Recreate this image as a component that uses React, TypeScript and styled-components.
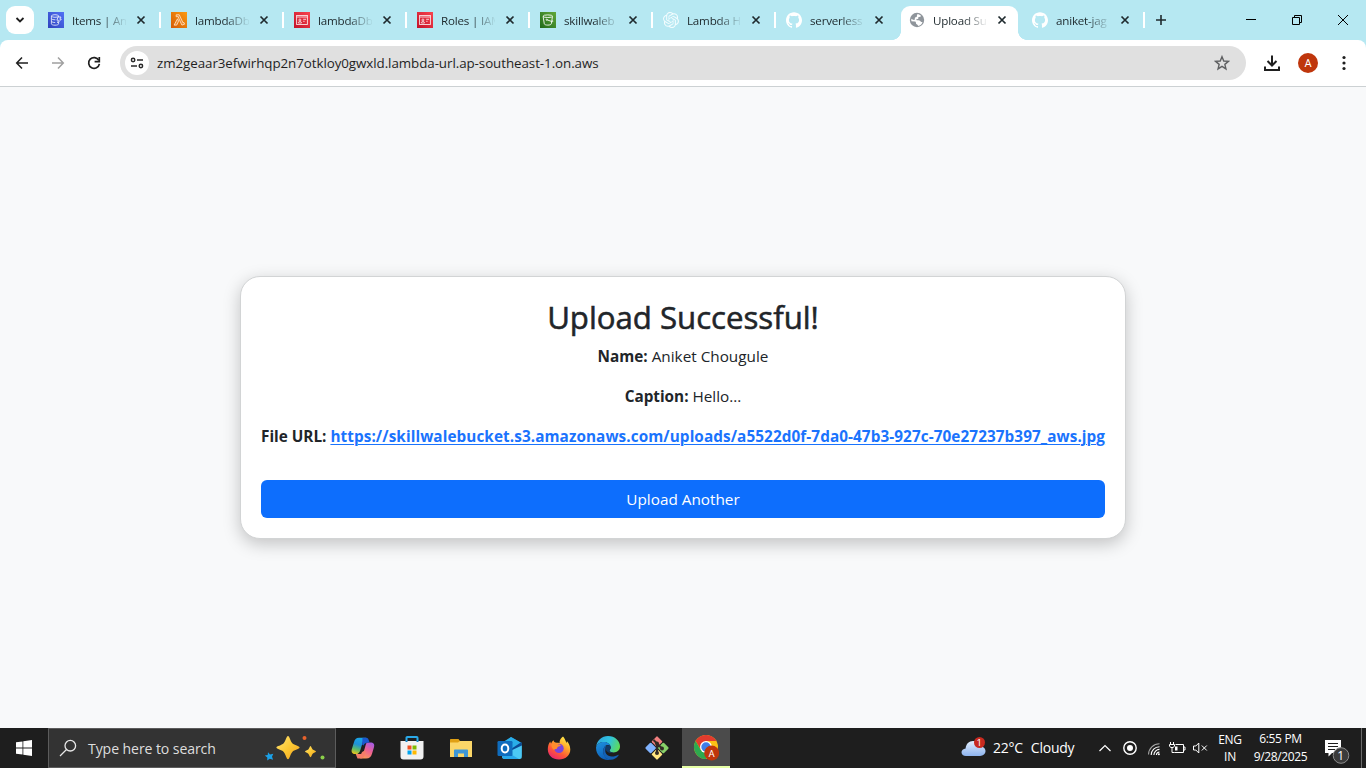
import React from "react";
import styled, { createGlobalStyle, css } from "styled-components";
import { SiOpenai, SiGithub } from "react-icons/si";

const GlobalStyle = createGlobalStyle`
  * { box-sizing: border-box; }
  body {
    margin: 0;
    overflow: hidden;
    font-family: "Open Sans", "Noto Sans", sans-serif;
    color: #212529;
  }
  svg { display: block; flex: none; }
`;

const Screen = styled.div`
  width: 1366px;
  height: 768px;
  display: flex;
  flex-direction: column;
  background: #f8f9fa;
`;

/* ---------- Tab strip ---------- */

const TabStrip = styled.header`
  height: 40px;
  flex: none;
  display: flex;
  align-items: center;
  background: #b6e8f2;
`;

const TabSearch = styled.button`
  width: 28px;
  height: 28px;
  margin: 0 6px;
  padding: 0;
  border: 0;
  border-radius: 9px;
  background: #fff;
  display: flex;
  align-items: center;
  justify-content: center;
`;

const Tab = styled.div<{ $active?: boolean }>`
  position: relative;
  width: 117px;
  height: 34px;
  margin-top: 6px;
  padding: 0 0 6px 8px;
  display: flex;
  align-items: center;
  flex: none;
  ${(p) =>
    p.$active &&
    css`
      background: #fff;
      border-radius: 9px 9px 0 0;
      &::before,
      &::after {
        content: "";
        position: absolute;
        bottom: 0;
        width: 9px;
        height: 9px;
      }
      &::before {
        left: -9px;
        background: radial-gradient(circle at 0 0, transparent 8.6px, #fff 9.2px);
      }
      &::after {
        right: -9px;
        background: radial-gradient(circle at 100% 0, transparent 8.6px, #fff 9.2px);
      }
    `}
`;

const TabTitle = styled.span`
  width: 54px;
  margin-left: 8px;
  padding-top: 2px;
  white-space: nowrap;
  font-size: 11.6px;
  line-height: 18px;
  letter-spacing: -0.2px;
  color: #1d282c;
  mask-image: linear-gradient(to right, #000 56%, rgba(0, 0, 0, 0.08) 98%);
`;

const TabClose = styled.span`
  margin-left: 10px;
  width: 10px;
  height: 10px;
`;

const Separator = styled.i<{ $hidden?: boolean }>`
  width: 2px;
  height: 16px;
  margin: 0 2px;
  flex: none;
  background: ${(p) => (p.$hidden ? "transparent" : "#fff")};
`;

const NewTab = styled.div`
  width: 28px;
  display: flex;
  justify-content: center;
`;

const WindowControls = styled.div`
  margin-left: auto;
  display: flex;
`;

const WindowButton = styled.div`
  width: 46px;
  height: 40px;
  display: flex;
  align-items: center;
  justify-content: center;
`;

/* ---------- Toolbar ---------- */

const ToolbarBack = styled.div`
  flex: none;
  background: #b6e8f2;
`;

const Toolbar = styled.nav`
  height: 47px;
  padding-bottom: 1px;
  display: flex;
  align-items: center;
  background: #fff;
  border-radius: 8px 8px 0 0;
  border-bottom: 1px solid #ccd1d3;
`;

const NavButtons = styled.div`
  width: 120px;
  padding-left: 4px;
  display: flex;
`;

const NavButton = styled.div`
  width: 36px;
  display: flex;
  justify-content: center;
`;

const Omnibox = styled.div`
  width: 1126px;
  height: 34px;
  padding: 0 16px 0 5px;
  display: flex;
  align-items: center;
  justify-content: space-between;
  border-radius: 17px;
  background: #e0e0e0;
`;

const Address = styled.div`
  display: flex;
  align-items: center;
  gap: 8px;
`;

const SiteInfo = styled.div`
  width: 24px;
  height: 24px;
  border-radius: 50%;
  background: #fff;
  display: flex;
  align-items: center;
  justify-content: center;
`;

const Url = styled.span`
  font-size: 13.35px;
  line-height: 20px;
  letter-spacing: -0.06px;
  color: #1f1f1f;
`;

const ToolbarActions = styled.div`
  display: flex;
  align-items: center;
  padding-left: 8px;
`;

const Avatar = styled.span`
  width: 20px;
  height: 20px;
  border-radius: 50%;
  background: #bf360c;
  color: #fff;
  font: 400 11px/21px Roboto, sans-serif;
  text-align: center;
`;

/* ---------- Page ---------- */

const Page = styled.main`
  flex: 1;
  display: flex;
  align-items: center;
  justify-content: center;
`;

const Card = styled.section`
  width: 886px;
  padding: 20px;
  border: 1px solid #d2d4d5;
  border-radius: 20px;
  background: #fff;
  box-shadow: 0 5px 17px rgba(0, 0, 0, 0.22);
  text-align: center;
`;

const Title = styled.h2`
  margin: 0 0 7px;
  padding-top: 1px;
  font-size: 31.2px;
  line-height: 38.4px;
  font-weight: 500;
  letter-spacing: -0.02px;
  -webkit-text-stroke: 0.55px #212529;
`;

const Line = styled.p`
  margin: 0 0 16px;
  font-size: 15.3px;
  line-height: 24px;
  white-space: nowrap;
`;

const Label = styled.strong`
  font-weight: 700;
`;

const FileLink = styled.a`
  font-weight: 700;
  letter-spacing: 0.08px;
  color: #1a73fd;
  text-decoration: underline;
  text-decoration-thickness: 1px;
  text-underline-offset: 2px;
`;

const PrimaryButton = styled.button`
  display: block;
  width: 100%;
  height: 38px;
  margin-top: 32px;
  padding: 0;
  border: 0;
  border-radius: 6px;
  background: #0d6efd;
  color: #fff;
  font: 400 15.3px/38px "Open Sans", "Noto Sans", sans-serif;
`;

/* ---------- Taskbar ---------- */

const Taskbar = styled.footer`
  height: 40px;
  flex: none;
  display: flex;
  background: #1e1e1e;
  color: #fff;
`;

const Start = styled.div`
  width: 48px;
  display: flex;
  align-items: center;
  justify-content: center;
`;

const Search = styled.div`
  width: 288px;
  height: 40px;
  padding: 0 9px 0 10px;
  display: flex;
  align-items: center;
  border: 1px solid #5c5c5c;
  background: #333;
`;

const SearchText = styled.span`
  flex: 1;
  margin-left: 11px;
  padding-top: 2px;
  font-size: 14.1px;
  line-height: 20px;
  letter-spacing: -0.1px;
  color: #dedede;
`;

const Apps = styled.div`
  display: flex;
  gap: 1px;
  margin-left: 3px;
`;

const AppButton = styled.div<{ $active?: boolean }>`
  width: 48px;
  height: 40px;
  display: flex;
  align-items: center;
  justify-content: center;
  background: ${(p) => (p.$active ? "#4b4b4b" : "transparent")};
  border-bottom: 2px solid ${(p) => (p.$active ? "#e6ffa6" : "transparent")};
  border-top: 2px solid transparent;
`;

const Tray = styled.div`
  margin-left: auto;
  display: flex;
  align-items: center;
`;

const TrayCell = styled.div<{ $w: number; $top?: number }>`
  width: ${(p) => p.$w}px;
  padding-top: ${(p) => p.$top ?? 0}px;
  display: flex;
  justify-content: center;
`;

const Weather = styled.span`
  width: 98px;
  margin-left: 7px;
  font-size: 14px;
  line-height: 20px;
  white-space: pre;
  word-spacing: 0.5px;
  letter-spacing: -0.22px;
`;

const TrayText = styled.div<{ $w: number; $lh: number; $ls?: number }>`
  width: ${(p) => p.$w}px;
  font-size: 12px;
  line-height: ${(p) => p.$lh}px;
  letter-spacing: ${(p) => p.$ls ?? 0}px;
  text-align: center;
  white-space: nowrap;
`;

const ShowDesktop = styled.i`
  width: 5px;
  height: 40px;
  border-left: 1px solid #6a6a6a;
`;

/* ---------- Icons ---------- */

const CloseIcon = () => (
  <svg width="10" height="10" viewBox="0 0 10 10">
    <path d="M1.5 1.5l7 7M8.5 1.5l-7 7" stroke="#1f2a2e" strokeWidth="1.7" />
  </svg>
);

const DynamoIcon = () => (
  <svg width="16" height="16" viewBox="0 0 16 16">
    <defs>
      <linearGradient id="dyn" x1="0" y1="1" x2="1" y2="0">
        <stop offset="0" stopColor="#2e43bd" />
        <stop offset="1" stopColor="#5271f6" />
      </linearGradient>
    </defs>
    <rect width="16" height="16" fill="url(#dyn)" />
    <g fill="none" stroke="#fff" strokeWidth=".9" opacity=".85">
      <ellipse cx="7" cy="4" rx="3.6" ry="1.3" />
      <path d="M3.4 4v7.8c0 .8 1.6 1.4 3.6 1.4s3.600-.6 3.600-1.400V10M3.400 6.600c.4.800 2 1.200 4 1.200M3.400 9.300c.4.800 2 1.200 3.800 1.200M10.600 4v1" />
      <path d="M10 5h3l-1.200 2.200h1.500L9.600 11l.8-2.800H8.900z" />
    </g>
  </svg>
);

const LambdaIcon = () => (
  <svg width="16" height="16" viewBox="0 0 16 16">
    <defs>
      <linearGradient id="lam" x1="0" y1="1" x2="1" y2="0">
        <stop offset="0" stopColor="#d45b07" />
        <stop offset="1" stopColor="#fc9a10" />
      </linearGradient>
    </defs>
    <rect width="16" height="16" fill="url(#lam)" />
    <path
      d="M5.200 2.800h3.100l3.700 8 1-.3.600 1.700-2.700.9L7.700 6.200 7.300 4.700H5.200zM6.500 6.800l1.100 2.400-1.900 3.900H3.100z"
      fill="#f08a2a"
      stroke="#ffe9d2"
      strokeWidth=".8"
      strokeLinejoin="round"
    />
  </svg>
);

const IamIcon = () => (
  <svg width="16" height="16" viewBox="0 0 16 16">
    <defs>
      <linearGradient id="iam" x1="0" y1="1" x2="1" y2="0">
        <stop offset="0" stopColor="#c3132b" />
        <stop offset="1" stopColor="#f9444e" />
      </linearGradient>
    </defs>
    <rect width="16" height="16" fill="url(#iam)" />
    <g fill="none" stroke="#fff" strokeWidth=".9" opacity=".85">
      <rect x="2.600" y="3.500" width="10.800" height="9" />
      <path d="M2.600 5h10.800M9.200 7.300h2.800M9.200 9.300h1.400M4.300 11c0-1 .7-1.600 1.600-1.600s1.600.6 1.600 1.600z" />
      <circle cx="5.900" cy="8" r="1" />
    </g>
  </svg>
);

const BucketIcon = () => (
  <svg width="16" height="16" viewBox="0 0 16 16">
    <defs>
      <linearGradient id="s3" x1="0" y1="1" x2="1" y2="0">
        <stop offset="0" stopColor="#1f6a1c" />
        <stop offset="1" stopColor="#62a83a" />
      </linearGradient>
    </defs>
    <rect width="16" height="16" fill="url(#s3)" />
    <g fill="none" stroke="#fff" strokeWidth=".95" opacity=".92">
      <ellipse cx="7.800" cy="4.200" rx="4.700" ry="1.300" />
      <path d="M3.100 4.400l1.200 7.400c.2.800 1.500 1.300 3.500 1.300s3.300-.5 3.500-1.300l1.200-7.400" />
      <path d="M7 7.800l5 1.800c1 .3 1.400-.6.300-1.300" />
      <circle cx="6.700" cy="7.700" r=".6" />
    </g>
  </svg>
);

const GlobeIcon = () => (
  <svg width="16" height="16" viewBox="0 0 16 16">
    <circle cx="8" cy="8" r="7.200" fill="#8f959b" />
    <path
      d="M8.200 2.300c1.500-.1 2.900.5 3.800 1.500-.1.900-.9 1.100-1.600 1.100-.9 0-1.300.5-1.100 1.100.2.800-.4 1.200-1.300 1.200-.7 0-1 .4-.6.900.4.400 2 .2 3 .4 1 .2 1.200 1.300 2 1.400h1.100c-.5 2-2.300 3.700-4.500 4 0-.9-.4-1.200-1-1.500-.9-.4-1.100-1-1.100-1.900 0-.7-.5-1-1.300-1.100L2.400 9.200c-.2-.8-.2-1.700 0-2.500 1 .6 1.800 1.300 2.700 1.200.7-.1.800-.8.700-1.400 0-.8.500-1.100 1.200-1.200.8-.2 1-.7.9-1.500z"
      fill="#fff"
    />
  </svg>
);

const ArrowIcon = ({ flip, color }: { flip?: boolean; color: string }) => (
  <svg width="16" height="16" viewBox="0 0 16 16">
    <path
      d={flip ? "M2 8h11M8 2.500L13.300 8 8 13.500" : "M14 8H3M8 2.500L2.700 8 8 13.500"}
      fill="none"
      stroke={color}
      strokeWidth="1.500"
    />
  </svg>
);

const ReloadIcon = () => (
  <svg width="16" height="16" viewBox="0 0 16 16">
    <path d="M12.800 5.300A5.400 5.400 0 1 0 13.400 8.900" fill="none" stroke="#1f1f1f" strokeWidth="1.700" />
    <path d="M13.300 2v4.700H8.600" fill="none" stroke="#1f1f1f" strokeWidth="1.700" />
  </svg>
);

const TuneIcon = () => (
  <svg width="14" height="14" viewBox="0 0 14 14" fill="none" stroke="#2a2a2a" strokeWidth="1.500">
    <circle cx="3.100" cy="4" r="1.700" />
    <path d="M7 4h6M1 10h6" />
    <circle cx="10.900" cy="10" r="1.700" />
  </svg>
);

const StarIcon = () => (
  <svg width="16" height="16" viewBox="0 0 16 16">
    <path
      d="M8 1.700l1.750 4.300 4.650.35-3.550 3 1.100 4.550L8 11.400l-3.950 2.500 1.100-4.550-3.550-3L6.250 6z"
      fill="none"
      stroke="#5f6062"
      strokeWidth="1.400"
    />
  </svg>
);

const DownloadIcon = () => (
  <svg width="18" height="18" viewBox="0 0 18 18" fill="none" stroke="#1f1f1f" strokeWidth="2">
    <path d="M9 1.500v10M4.500 7L9 11.500 13.500 7M2 12.500V16h14v-3.500" />
  </svg>
);

const DotsIcon = () => (
  <svg width="4" height="16" viewBox="0 0 4 16" fill="#1f1f1f">
    <circle cx="2" cy="2.500" r="1.600" />
    <circle cx="2" cy="8" r="1.600" />
    <circle cx="2" cy="13.500" r="1.600" />
  </svg>
);

const SparkleArt = () => (
  <svg width="62" height="26" viewBox="0 0 62 26">
    <defs>
      <linearGradient id="spk" x1="0" y1="0" x2="1" y2="1">
        <stop offset="0" stopColor="#ffe37a" />
        <stop offset=".5" stopColor="#fcc934" />
        <stop offset="1" stopColor="#f0a020" />
      </linearGradient>
    </defs>
    <path
      d="M24 1c1.500 0 2.300 5.200 4.300 7.200s7.300 2.800 7.300 4.400-5.300 2.300-7.300 4.300-2.800 7.300-4.300 7.300-2.300-5.300-4.300-7.300-7.300-2.800-7.300-4.300 5.300-2.400 7.300-4.400S22.500 1 24 1z"
      fill="url(#spk)"
    />
    <path
      d="M46.500 11c.8 0 1.200 2.500 2.200 3.500s3.300 1.200 3.300 2-2.300 1.200-3.300 2.200-1.400 3.500-2.200 3.500-1.200-2.500-2.200-3.500-3.300-1.400-3.300-2.200 2.300-1 3.300-2 1.400-3.500 2.200-3.500z"
      fill="url(#spk)"
    />
    <path d="M4 17.200l2 2.200 3.300-.6-1.300 3 1.100 2.900-3.300-.9-2.600 1.700.1-3-2.500-2 2.900-.5z" fill="#1ba1e8" />
    <circle cx="40.500" cy="3" r="2" fill="#e8622c" />
    <circle cx="58.500" cy="22.500" r="2" fill="#8bd04a" />
  </svg>
);

const CopilotIcon = () => (
  <svg width="24" height="24" viewBox="0 0 24 24">
    <defs>
      <linearGradient id="cpA" x1="0.500" y1="0" x2="0.200" y2="1">
        <stop offset="0" stopColor="#1aa7e8" />
        <stop offset=".4" stopColor="#1f90d8" />
        <stop offset=".7" stopColor="#5bbb6a" />
        <stop offset="1" stopColor="#f0c419" />
      </linearGradient>
      <linearGradient id="cpB" x1="0.800" y1="0" x2="0.300" y2="1">
        <stop offset="0" stopColor="#a45ce6" />
        <stop offset=".5" stopColor="#ee6290" />
        <stop offset="1" stopColor="#fb9a55" />
      </linearGradient>
    </defs>
    <path d="M16 6.500h3.200c3.500 0 4.700 1.800 3.700 5l-1.800 6c-1 3.400-2.600 5-6 5H8.600c2-.4 2.700-2 3.300-4l2-6.700c.5-1.800.8-4 2.100-5.300z" fill="url(#cpB)" />
    <path d="M6.500 22.500h3.300c2.200 0 3.200-1.400 3.800-3.400l1.300-4.300c-2.600 0-4 .8-4.800 3.200H4.700z" fill="#f57d68" />
    <path d="M8 1.800h7.500c-2.200.4-3 2-3.600 4L9.700 13c-.6 2.200-1.300 4-3.300 5H4.700c-3.600 0-4.800-1.900-3.800-5l1.900-6.300c1-3.300 2.200-4.900 5.200-4.900z" fill="url(#cpA)" />
    <path d="M11.500 1.800h3.700c1.700 0 2.200 1.300 2.700 2.700l.7 2c-3-.2-5 .3-6 3l-1.400-.7z" fill="#1a58cf" />
  </svg>
);

const StoreIcon = () => (
  <svg width="24" height="24" viewBox="0 0 24 24">
    <path d="M6.500 6V1.800c0-.5.300-.8.800-.8h9.400c.5 0 .8.300.8.800V6" fill="none" stroke="#2aa9e8" strokeWidth="2" />
    <path d="M.5 5h23v15.500a3 3 0 0 1-3 3h-17a3 3 0 0 1-3-3z" fill="#f1f1f1" />
    <path d="M6.500 5v1M17.500 5v1" stroke="#1380c2" strokeWidth="2" />
    <path d="M7.500 9.500h4v4h-4z" fill="#f25022" />
    <path d="M12.500 9.500h4v4h-4z" fill="#7fba00" />
    <path d="M7.500 14.500h4v4h-4z" fill="#00a4ef" />
    <path d="M12.500 14.500h4v4h-4z" fill="#ffb900" />
  </svg>
);

const FolderIcon = () => (
  <svg width="24" height="24" viewBox="0 0 24 24">
    <path d="M1 4c0-.6.400-1 1-1h7.500l1.500 2h11c.6 0 1 .4 1 1v4H1z" fill="#e0a014" />
    <path d="M1 6.500h8l2-1.500h12v16H1z" fill="#fbd668" />
    <path d="M5 21v-6.500c0-.6.400-1 1-1h12c.6 0 1 .4 1 1V21h-4v-3.500H9V21z" fill="#3f97d6" />
  </svg>
);

const OutlookIcon = () => (
  <svg width="26" height="24" viewBox="0 0 26 24">
    <path d="M5 8l9-7 10.500 6v13L14 23 5 20z" fill="#1b7fd0" />
    <path d="M6 6l8-5 10.500 6L16 13z" fill="#2aaee8" />
    <path d="M14 13l10.500-7v5L14 18z" fill="#0a4a94" />
    <path d="M5 19l19.800-9.500V21c0 1.200-.8 2-2 2H7.500C6 23 5 22 5 20.500z" fill="#4cc9f4" />
    <path d="M5 19l6-2.500L22 23H7.500C6 23 5 22 5 20.500z" fill="#28a8ea" />
    <rect x=".5" y="5" width="15" height="15" rx="1.200" fill="#0f6cbd" />
    <ellipse cx="8" cy="12.500" rx="3.300" ry="3.900" fill="none" stroke="#fff" strokeWidth="2" />
  </svg>
);

const FirefoxIcon = () => (
  <svg width="24" height="24" viewBox="0 0 24 24">
    <defs>
      <linearGradient id="ffx" x1=".8" y1="0" x2=".2" y2="1">
        <stop offset="0" stopColor="#fff14f" />
        <stop offset=".35" stopColor="#ffa92b" />
        <stop offset=".65" stopColor="#ff5a36" />
        <stop offset="1" stopColor="#e91e75" />
      </linearGradient>
    </defs>
    <path
      d="M16 .5c1.200 1.300 2.300 3 2.700 4.800.6.600 1 1.300 1.300 2 .1-.8 0-1.500-.2-2.200 1.700 1.500 3.500 4.700 3.500 8.400 0 6-5 10-11.300 10S.8 19.300.8 13.200c0-3.200 1-5.800 2.500-7.700.1 1 .4 1.600.8 2.100C4.500 6.500 5.400 5.200 6.600 4.300c.1 1.300.9 2.300 3.200 2.400 1 .1 1.800.1 2.800.3C12.200 4.600 14 1.800 16 .5z"
      fill="url(#ffx)"
    />
    <circle cx="12" cy="12.400" r="4.700" fill="#7a45dc" />
    <path d="M4.500 8.300c2.500-1.600 5-1.200 7 .2 1.500 0 2.300.4 2.200 1-.2.900-2 .9-2.700 1.300-.8.500-.7 1.600-1.500 2.300-1 .2-2 0-2.500.9-1.500-1-2.800-3-2.500-5.700z" fill="#ff8d2d" />
  </svg>
);

const EdgeIcon = () => (
  <svg width="24" height="24" viewBox="0 0 24 24">
    <defs>
      <linearGradient id="edA" x1="0" y1=".3" x2="1" y2=".6">
        <stop offset="0" stopColor="#2ea5dc" />
        <stop offset=".5" stopColor="#2fc2df" />
        <stop offset="1" stopColor="#5fdc55" />
      </linearGradient>
      <linearGradient id="edB" x1=".2" y1="0" x2=".6" y2="1">
        <stop offset="0" stopColor="#1d8fdc" />
        <stop offset="1" stopColor="#0d5cb5" />
      </linearGradient>
    </defs>
    <path d="M.2 10.500C1 4.500 5.800 0 12 0c7 0 12 5 12 10.300 0 4-3 6.200-6.300 6.200-2.700 0-4.200-.9-4.200-1.900 0-.8 1.300-1.200 1.300-3C14.800 8.500 11.500 6 8 6 4 6 1.300 8 .2 10.500z" fill="url(#edA)" />
    <path d="M.1 11C1 8 4 6 8 6c3.800 0 6.800 2.500 6.800 5.300 0-1.600-1.800-2.700-3.600-2.200-2.500.7-4 3.300-4 5.900 0 4.500 3 8.200 7.300 8.700-.8.200-1.700.300-2.500.300C5 24-.5 18 .1 11z" fill="url(#edB)" />
    <path d="M9.600 12.500c-1.300 4 1.200 8 6.300 8 2.400 0 4.800-.9 6.100-1.600.4-.2.800.200.5.600-1.700 2.500-4.800 4.300-8 4.200-5-.4-8-4.500-7.300-9.400.3-2 1.300-3.700 2.800-4.700z" fill="#1460b3" />
    <path d="M11 9.500c1.800-.9 3.700.2 3.700 2 0 1.400-1.200 2-1.200 2.900 0 1.300 1.500 2.100 4 2.100-3 1.500-7.200-.2-8-3.200-.3-1.400.2-3 1.500-3.800z" fill="#123a66" />
  </svg>
);

const GitIcon = () => (
  <svg width="26" height="26" viewBox="0 0 26 26">
    <g transform="rotate(45 13 13)">
      <rect x="4.500" y="4.500" width="8" height="8" rx="1" fill="#f28080" />
      <rect x="4.500" y="13.500" width="8" height="8" rx="1" fill="#80b3ff" />
      <rect x="13.500" y="4.500" width="8" height="8" rx="1" fill="#88d069" />
      <rect x="13.500" y="13.500" width="8" height="8" rx="1" fill="#ffe680" />
    </g>
    <path d="M9.500 5l3.500 3.500v10M13 8.500l5 5" fill="none" stroke="#322b25" strokeWidth="2" />
    <circle cx="13" cy="8.500" r="2" fill="#322b25" />
    <circle cx="13" cy="18" r="2" fill="#322b25" />
    <circle cx="18" cy="13.500" r="2" fill="#322b25" />
  </svg>
);

const ChromeIcon = () => (
  <svg width="26" height="26" viewBox="-1 0 26 26">
    <circle cx="12" cy="12" r="12" fill="#fbc116" />
    <path d="M12 6h10.400A12 12 0 0 0 1.600 6L7 15z" fill="#e33b2e" />
    <path d="M1.600 6A12 12 0 0 0 12 24l5.200-9L12 12 6.800 15z" fill="#2da94f" />
    <circle cx="12" cy="12" r="6" fill="#fff" />
    <circle cx="12" cy="12" r="4.700" fill="#3f7ee8" />
    <circle cx="17.700" cy="18" r="7.500" fill="#bf360c" />
    <text x="17.700" y="21.500" textAnchor="middle" fontFamily="Roboto, sans-serif" fontSize="9.500" fill="#fff">
      A
    </text>
  </svg>
);

const WeatherIcon = () => (
  <svg width="25" height="22" viewBox="0 0 25 22">
    <defs>
      <linearGradient id="cld" x1="0" y1="0" x2="0" y2="1">
        <stop offset="0" stopColor="#e2eefd" />
        <stop offset="1" stopColor="#8db3ee" />
      </linearGradient>
    </defs>
    <path d="M5 19c-2.700 0-4.500-1.500-4.500-3.700s1.800-3.700 4.100-3.900C5 7 8 4 12 4c3.500 0 6 2 6.800 5.200 3.200.1 5.700 2 5.700 4.900S22.200 19 19 19z" fill="url(#cld)" />
    <circle cx="18.500" cy="5.500" r="5.500" fill="#c82a20" />
    <text x="18.300" y="9" textAnchor="middle" fontFamily="Open Sans, sans-serif" fontSize="9.500" fill="#fff">
      1
    </text>
  </svg>
);

const RecordIcon = () => (
  <svg width="14" height="14" viewBox="0 0 14 14">
    <circle cx="7" cy="7" r="6.200" fill="none" stroke="#fff" strokeWidth="1.400" />
    <circle cx="7" cy="7" r="3" fill="#fff" />
  </svg>
);

const WifiIcon = () => (
  <svg width="14" height="14" viewBox="0 0 14 14" fill="none" stroke="#fff" strokeWidth="1.100">
    <path d="M1.500 12.500A11 11 0 0 1 12.500 1.800" stroke="#a8a8a8" />
    <path d="M4.200 13A8.300 8.300 0 0 1 12.500 4.700M6.900 13A5.600 5.600 0 0 1 12.500 7.400" />
    <path d="M9.400 13a3.200 3.200 0 0 1 3.100-3" />
    <circle cx="11.900" cy="12.300" r="1" fill="#fff" stroke="none" />
  </svg>
);

const BatteryIcon = () => (
  <svg width="17" height="12" viewBox="0 0 17 12" fill="none" stroke="#fff" strokeWidth="1">
    <path d="M6.500 2.500h8v8h-9M14.500 5h1.500v3h-1.500M1.500 0v2.500M4.500 0v2.500M.5 2.500h5v1.800l-1.500 1.200h-2L.5 4.300zM3 5.500v5h2.500" />
    <path d="M6 4.500h2.500v4H6z" fill="#fff" stroke="none" />
  </svg>
);

const MuteIcon = () => (
  <svg width="15" height="12" viewBox="0 0 15 12" fill="none" stroke="#fff" strokeWidth="1">
    <path d="M.5 4v4h2.300l3 3V1l-3 3zM8.800 3.500l5 5M13.800 3.500l-5 5" />
  </svg>
);

const NoticeIcon = () => (
  <svg width="25" height="26" viewBox="0 0 25 26">
    <path d="M0 2h16v13H7l-3.500 3.500V15H0z" fill="#fff" />
    <path d="M3 5.500h10M3 8.500h10M3 11.500h7" stroke="#1e1e1e" strokeWidth="1.200" />
    <circle cx="16" cy="17.500" r="7.800" fill="#3b3b3b" stroke="#8c8c8c" strokeWidth="1" />
    <text x="15.700" y="22" textAnchor="middle" fontFamily="Open Sans, sans-serif" fontSize="12" fill="#fff">
      1
    </text>
  </svg>
);

type TabInfo = { title: string; icon: React.ReactNode; active?: boolean; noSep?: boolean };

const tabs: TabInfo[] = [
  { title: "Items | An", icon: <DynamoIcon /> },
  { title: "lambdaDb", icon: <LambdaIcon /> },
  { title: "lambdaDb", icon: <IamIcon /> },
  { title: "Roles | IAM", icon: <IamIcon /> },
  { title: "skillwaleb", icon: <BucketIcon /> },
  { title: "Lambda H", icon: <SiOpenai size={16} color="#f3fcfe" /> },
  { title: "serverless", icon: <SiGithub size={16} color="#fff" />, noSep: true },
  { title: "Upload Su", icon: <GlobeIcon />, active: true, noSep: true },
  { title: "aniket-jag", icon: <SiGithub size={16} color="#fff" /> },
];

export default function App() {
  return (
    <Screen>
      <GlobalStyle />
      <TabStrip>
        <TabSearch>
          <svg width="10" height="8" viewBox="0 0 10 8">
            <path d="M1.500 2L5 5.500 8.500 2" fill="none" stroke="#1f1f1f" strokeWidth="1.800" />
          </svg>
        </TabSearch>
        {tabs.map((tab, i) => (
          <React.Fragment key={i}>
            <Tab $active={tab.active}>
              {tab.icon}
              <TabTitle>{tab.title}</TabTitle>
              <TabClose>
                <CloseIcon />
              </TabClose>
            </Tab>
            <Separator $hidden={tab.noSep} />
          </React.Fragment>
        ))}
        <NewTab>
          <svg width="12" height="12" viewBox="0 0 12 12">
            <path d="M6 1v10M1 6h10" stroke="#1f2a2e" strokeWidth="1.600" />
          </svg>
        </NewTab>
        <WindowControls>
          <WindowButton>
            <svg width="10" height="10" viewBox="0 0 10 10">
              <path d="M0 4.500h10" stroke="#000" />
            </svg>
          </WindowButton>
          <WindowButton>
            <svg width="10" height="10" viewBox="0 0 10 10" fill="none" stroke="#000">
              <path d="M.5 2.500h7v7h-7zM2.500 2.500v-2h7v7h-2" />
            </svg>
          </WindowButton>
          <WindowButton>
            <svg width="10" height="10" viewBox="0 0 10 10">
              <path d="M0 0l10 10M10 0L0 10" stroke="#000" />
            </svg>
          </WindowButton>
        </WindowControls>
      </TabStrip>

      <ToolbarBack>
        <Toolbar>
          <NavButtons>
            <NavButton>
              <ArrowIcon color="#1f1f1f" />
            </NavButton>
            <NavButton>
              <ArrowIcon flip color="#a0a0a0" />
            </NavButton>
            <NavButton>
              <ReloadIcon />
            </NavButton>
          </NavButtons>
          <Omnibox>
            <Address>
              <SiteInfo>
                <TuneIcon />
              </SiteInfo>
              <Url>zm2geaar3efwirhqp2n7otkloy0gwxld.lambda-url.ap-southeast-1.on.aws</Url>
            </Address>
            <StarIcon />
          </Omnibox>
          <ToolbarActions>
            <NavButton>
              <DownloadIcon />
            </NavButton>
            <NavButton>
              <Avatar>A</Avatar>
            </NavButton>
            <NavButton>
              <DotsIcon />
            </NavButton>
          </ToolbarActions>
        </Toolbar>
      </ToolbarBack>

      <Page>
        <Card>
          <Title>Upload Successful!</Title>
          <Line>
            <Label>Name:</Label> Aniket Chougule
          </Line>
          <Line>
            <Label>Caption:</Label> Hello...
          </Line>
          <Line>
            <Label>File URL:</Label>{" "}
            <FileLink>https://skillwalebucket.s3.amazonaws.com/uploads/a5522d0f-7da0-47b3-927c-70e27237b397_aws.jpg</FileLink>
          </Line>
          <PrimaryButton>Upload Another</PrimaryButton>
        </Card>
      </Page>

      <Taskbar>
        <Start>
          <svg width="16" height="16" viewBox="0 0 16 16" fill="#fff">
            <path d="M0 2.300L6.500 1.400v6.200H0zM7.300 1.300L16 0v7.600H7.300zM0 8.400h6.500v6.200L0 13.700zM7.300 8.400H16V16l-8.700-1.300z" />
          </svg>
        </Start>
        <Search>
          <svg width="18" height="18" viewBox="0 0 18 18" fill="none" stroke="#e8e8e8" strokeWidth="1.300">
            <circle cx="11.300" cy="6.700" r="5.300" />
            <path d="M7.500 10.500L1 17" />
          </svg>
          <SearchText>Type here to search</SearchText>
          <SparkleArt />
        </Search>
        <Apps>
          <AppButton><CopilotIcon /></AppButton>
          <AppButton><StoreIcon /></AppButton>
          <AppButton><FolderIcon /></AppButton>
          <AppButton><OutlookIcon /></AppButton>
          <AppButton><FirefoxIcon /></AppButton>
          <AppButton><EdgeIcon /></AppButton>
          <AppButton><GitIcon /></AppButton>
          <AppButton $active><ChromeIcon /></AppButton>
        </Apps>
        <Tray>
          <WeatherIcon />
          <Weather>{"22°C  Cloudy"}</Weather>
          <TrayCell $w={27}>
            <svg width="12" height="8" viewBox="0 0 12 8">
              <path d="M.5 7L6 1.500 11.500 7" fill="none" stroke="#fff" strokeWidth="1.200" />
            </svg>
          </TrayCell>
          <TrayCell $w={23}><RecordIcon /></TrayCell>
          <TrayCell $w={25} $top={2}><WifiIcon /></TrayCell>
          <TrayCell $w={23}><BatteryIcon /></TrayCell>
          <TrayCell $w={23}><MuteIcon /></TrayCell>
          <TrayText $w={36} $lh={17} $ls={-0.3}>
            ENG
            <br />
            IN
          </TrayText>
          <TrayText $w={65} $lh={18} $ls={-0.35}>
            6:55 PM
            <br />
            9/28/2025
          </TrayText>
          <TrayCell $w={48} $top={5}><NoticeIcon /></TrayCell>
          <ShowDesktop />
        </Tray>
      </Taskbar>
    </Screen>
  );
}
